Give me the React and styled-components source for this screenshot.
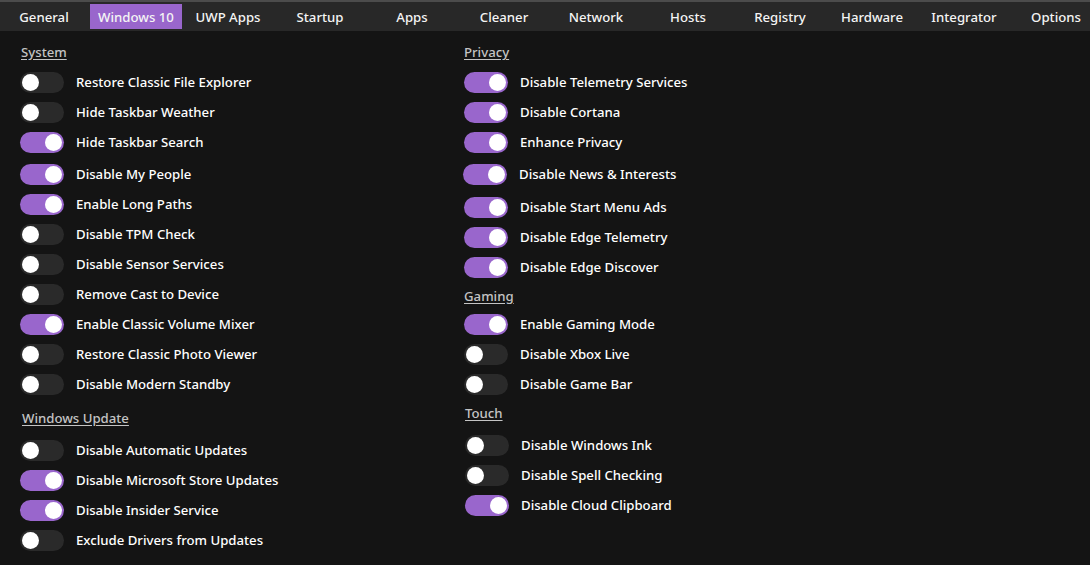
import React from "react";
import styled, { createGlobalStyle } from "styled-components";

const GlobalStyle = createGlobalStyle`
  html, body {
    margin: 0;
    padding: 0;
    background: #141414;
    font-family: "Noto Sans", "Open Sans", sans-serif;
    color: #ffffff;
  }
`;

const Window = styled.div`
  width: 1090px;
  height: 565px;
  overflow: hidden;
  background: #141414;
  border-top: 2px solid #4c4c4c;
  box-sizing: border-box;
`;

const TabBar = styled.nav`
  display: flex;
  height: 29px;
  align-items: center;
  background: #282828;
  margin-left: -2px;
`;

const Tab = styled.div`
  flex: 0 0 92px;
  height: 25px;
  display: flex;
  align-items: center;
  justify-content: center;
  font-size: 13.2px;
  font-weight: 500;
  color: #f4f4f4;
  background: ${(p) => (p.$active ? "#9966cc" : "transparent")};
`;

const Columns = styled.main`
  display: grid;
  grid-template-columns: 444px 1fr;
  padding: 11px 0 0 20px;
`;

const Column = styled.section`
  display: flex;
  flex-direction: column;
`;

const SectionTitle = styled.h3`
  margin: ${(p) => p.$top || 0}px 0 ${(p) => p.$bottom || 5}px ${(p) => p.$indent || 0}px;
  height: 20px;
  line-height: 20px;
  font-size: 13.2px;
  font-weight: 500;
  color: #c4c4c4;
  text-decoration: underline;
  text-underline-offset: 2px;
`;

const Row = styled.div`
  display: flex;
  align-items: center;
  height: 30px;
  margin-top: ${(p) => p.$shift || 0}px;
  margin-left: ${(p) => p.$indent || 0}px;
`;

const Track = styled.div`
  position: relative;
  width: 44px;
  height: 21px;
  border-radius: 11px;
  background: ${(p) => (p.$on ? "#9966cc" : "#2a2a2a")};
  flex: none;
`;

const Knob = styled.span`
  position: absolute;
  top: 2px;
  left: ${(p) => (p.$on ? "25px" : "2px")};
  width: 17px;
  height: 17px;
  border-radius: 50%;
  background: #ffffff;
`;

const Label = styled.span`
  margin-left: 12px;
  font-size: 13.2px;
  font-weight: 500;
  color: #ffffff;
  white-space: nowrap;
`;

const tabs = [
  "General",
  "Windows 10",
  "UWP Apps",
  "Startup",
  "Apps",
  "Cleaner",
  "Network",
  "Hosts",
  "Registry",
  "Hardware",
  "Integrator",
  "Options",
];

const Toggle = ({ on, label, shift, indent }) => (
  <Row $shift={shift} $indent={indent}>
    <Track $on={on}>
      <Knob $on={on} />
    </Track>
    <Label>{label}</Label>
  </Row>
);

const App = () => {
  return (
    <>
      <GlobalStyle />
      <Window>
        <TabBar>
          {tabs.map((t) => (
            <Tab key={t} $active={t === "Windows 10"}>
              {t}
            </Tab>
          ))}
        </TabBar>
        <Columns>
          <Column>
            <SectionTitle $indent={1}>System</SectionTitle>
            <Toggle label="Restore Classic File Explorer" />
            <Toggle label="Hide Taskbar Weather" />
            <Toggle on label="Hide Taskbar Search" />
            <Toggle on label="Disable My People" shift={2} />
            <Toggle on label="Enable Long Paths" />
            <Toggle label="Disable TPM Check" />
            <Toggle label="Disable Sensor Services" />
            <Toggle label="Remove Cast to Device" />
            <Toggle on label="Enable Classic Volume Mixer" />
            <Toggle label="Restore Classic Photo Viewer" />
            <Toggle label="Disable Modern Standby" />
            <SectionTitle $top={9} $bottom={7} $indent={2}>
              Windows Update
            </SectionTitle>
            <Toggle label="Disable Automatic Updates" />
            <Toggle on label="Disable Microsoft Store Updates" />
            <Toggle on label="Disable Insider Service" />
            <Toggle label="Exclude Drivers from Updates" />
          </Column>
          <Column>
            <SectionTitle>Privacy</SectionTitle>
            <Toggle on label="Disable Telemetry Services" />
            <Toggle on label="Disable Cortana" />
            <Toggle on label="Enhance Privacy" />
            <Toggle on label="Disable News & Interests" shift={2} indent={-1} />
            <Toggle on label="Disable Start Menu Ads" shift={3} />
            <Toggle on label="Disable Edge Telemetry" />
            <Toggle on label="Disable Edge Discover" />
            <SectionTitle $top={4} $bottom={3}>
              Gaming
            </SectionTitle>
            <Toggle on label="Enable Gaming Mode" />
            <Toggle label="Disable Xbox Live" />
            <Toggle label="Disable Game Bar" />
            <SectionTitle $top={4} $bottom={7} $indent={1}>
              Touch
            </SectionTitle>
            <Toggle label="Disable Windows Ink" indent={1} />
            <Toggle label="Disable Spell Checking" indent={1} />
            <Toggle on label="Disable Cloud Clipboard" indent={1} />
          </Column>
        </Columns>
      </Window>
    </>
  );
};

export default App;
